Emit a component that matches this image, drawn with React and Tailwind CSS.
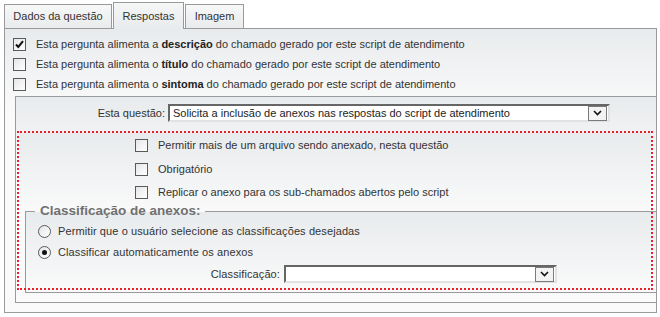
import { ChevronDown } from 'lucide-react'

const FONT = "font-['Liberation_Sans',Arial,sans-serif]"
const PANEL_BG = 'bg-[linear-gradient(to_bottom,#e8ebed,#fafafa_80px)]'

function Checkbox({ checked }) {
  return (
    <span className="flex h-[13px] w-[13px] shrink-0 items-center justify-center border border-[#5a5a5a] bg-[linear-gradient(to_bottom_right,#e6e6e6,#ffffff)]">
      {checked && (
        <svg width="11" height="11" viewBox="0 0 11 11">
          <path d="M2 5.5 L4.3 8 L9 2.2" fill="none" stroke="#111" strokeWidth="2" />
        </svg>
      )}
    </span>
  )
}

function Radio({ checked }) {
  return (
    <span className="flex h-[13px] w-[13px] shrink-0 items-center justify-center rounded-full border border-[#5a5a5a] bg-[linear-gradient(to_bottom_right,#e4e4e4,#ffffff)]">
      {checked && <span className="h-[5px] w-[5px] rounded-full bg-[#111]" />}
    </span>
  )
}

function Select({ value, className }) {
  return (
    <div className={`flex h-[18px] items-center border-2 border-t-[#666] border-l-[#666] border-r-[#e2e2e2] border-b-[#e2e2e2] bg-white ${className}`}>
      <span className="flex-1 truncate pl-[3px] text-[#222]">{value}</span>
      <span className="mr-px flex h-[15px] w-[19px] items-center justify-center border border-[#7a7a7a] bg-[#f3f3f3]">
        <svg width="9" height="6" viewBox="0 0 9 6">
          <path d="M1 1 L4.5 4.5 L8 1" fill="none" stroke="#111" strokeWidth="1.6" />
        </svg>
      </span>
    </div>
  )
}

const Tab = ({ label, active, w }) => (
  <div
    className={
      active
        ? `relative z-10 -mb-px flex h-[27px] items-center justify-center border border-b-0 border-[#9a9a9a] bg-[linear-gradient(to_bottom,#f5f6f6,#e8ebed)] ${w}`
        : `flex h-[24px] items-center justify-center border border-b-0 border-[#9a9a9a] bg-[linear-gradient(to_bottom,#f7f8f8,#e9ebec)] ${w}`
    }
  >
    {label}
  </div>
)

const FEEDS = [
  { word: 'descrição', art: 'a', checked: true },
  { word: 'título', art: 'o' },
  { word: 'sintoma', art: 'o' },
]

const OPTIONS = [
  'Permitir mais de um arquivo sendo anexado, nesta questão',
  'Obrigatório',
  'Replicar o anexo para os sub-chamados abertos pelo script',
]

export default function App() {
  return (
    <div className={`h-[317px] w-[660px] bg-white pl-[4px] pt-[2px] text-[11px] leading-none text-[#333] ${FONT}`}>
      <div className="flex h-[26px] items-end gap-px">
        <Tab label="Dados da questão" w="w-[108px]" />
        <Tab label="Respostas" w="w-[71px]" active />
        <Tab label="Imagem" w="w-[59px]" />
      </div>

      <div className={`h-[285px] w-[653px] border border-[#9a9a9a] pt-[5px] ${PANEL_BG}`}>
        {FEEDS.map((f) => (
          <div key={f.word} className="flex h-[20px] items-center gap-[10px] pl-[8px]">
            <Checkbox checked={f.checked} />
            <span>
              Esta pergunta alimenta {f.art} <b className="text-[#222]">{f.word}</b> do chamado gerado por este script de atendimento
            </span>
          </div>
        ))}

        <div className={`ml-[10px] mt-[2px] h-[207px] border-y border-l border-[#9a9a9a] pt-[7px] ${PANEL_BG}`}>
          <div className="flex items-center gap-[3px]">
            <span className="w-[149px] text-right">Esta questão:</span>
            <Select className="w-[442px]" value="Solicita a inclusão de anexos nas respostas do script de atendimento" />
          </div>

          <div className={`ml-[3px] mr-[5px] mt-[11px] h-[155px] outline-2 outline-dotted outline-[#e8202a] ${PANEL_BG}`}>
            {OPTIONS.map((o, i) => (
              <div key={o} className={`flex items-center gap-[10px] pl-[116px] ${i === 2 ? 'h-[22px]' : 'h-[24px]'}`}>
                <Checkbox />
                <span>{o}</span>
              </div>
            ))}

            <fieldset className={`-mr-[5px] ml-[6px] h-[90px] border-y border-l border-[#9a9a9a] ${PANEL_BG}`}>
              <legend className="ml-[9px] pl-[5px] pr-[4px] text-[13.5px] font-bold leading-[16px] text-[#707070]">
                Classificação de anexos:
              </legend>
              <div className="pt-[2px] tracking-[0.1px]">
                <label className="flex h-[21px] items-center gap-[7px] pl-[12px]">
                  <Radio />
                  <span>Permitir que o usuário selecione as classificações desejadas</span>
                </label>
                <label className="flex h-[21px] items-center gap-[7px] pl-[12px]">
                  <Radio checked />
                  <span>Classificar automaticamente os anexos</span>
                </label>
                <div className="mt-[2px] flex items-center gap-[4px]">
                  <span className="w-[254px] text-right">Classificação:</span>
                  <Select className="w-[273px]" value="" />
                </div>
              </div>
            </fieldset>
          </div>
        </div>
      </div>
    </div>
  )
}
